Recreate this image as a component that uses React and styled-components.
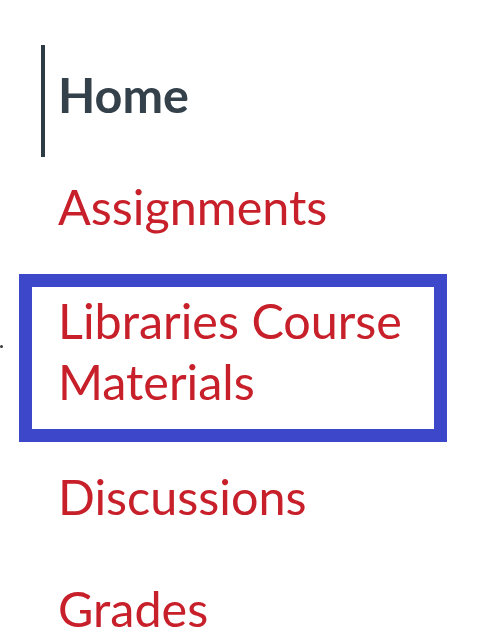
import React from 'react'
import styled, { createGlobalStyle } from 'styled-components'

const GlobalStyle = createGlobalStyle`
  html, body {
    margin: 0;
    padding: 0;
    background: #ffffff;
  }
  body {
    font-family: Lato, "Open Sans", "Liberation Sans", sans-serif;
  }
`

const Nav = styled.ul`
  list-style: none;
  margin: 0;
  padding: 45px 0 0 0;
  width: 480px;
  height: 640px;
  box-sizing: border-box;
  overflow: hidden;
`

const Item = styled.li`
  display: block;
  padding: 19px 0 32px 58px;
  font-size: 48.5px;
  line-height: 61px;
  color: #c8202a;
  white-space: nowrap;
`

const ActiveItem = styled.li`
  display: block;
  margin-left: 41px;
  padding: 19px 0 32px 13px;
  border-left: 4px solid #2d3b45;
  font-size: 48.5px;
  line-height: 61px;
  font-weight: 700;
  color: #34414b;
`

const FocusRow = styled.li`
  display: flex;
  align-items: flex-start;
  margin: 5px 0;
`

const Dot = styled.span`
  width: 3px;
  height: 3px;
  margin-top: 71px;
  border-radius: 50%;
  background: #3a3a3a;
  flex: none;
`

const FocusBox = styled.a`
  display: block;
  margin-left: 16px;
  width: 428px;
  box-sizing: border-box;
  padding: 3px 0 17px 26px;
  border: 13px solid #3d47c9;
  font-size: 48.5px;
  line-height: 61px;
  color: #c8202a;
  text-decoration: none;
`

export default function App () {
  return (
    <>
      <GlobalStyle />
      <Nav>
        <ActiveItem>Home</ActiveItem>
        <Item>Assignments</Item>
        <FocusRow>
          <Dot />
          <FocusBox href='#'>Libraries Course<br />Materials</FocusBox>
        </FocusRow>
        <Item>Discussions</Item>
        <Item>Grades</Item>
      </Nav>
    </>
  )
}
